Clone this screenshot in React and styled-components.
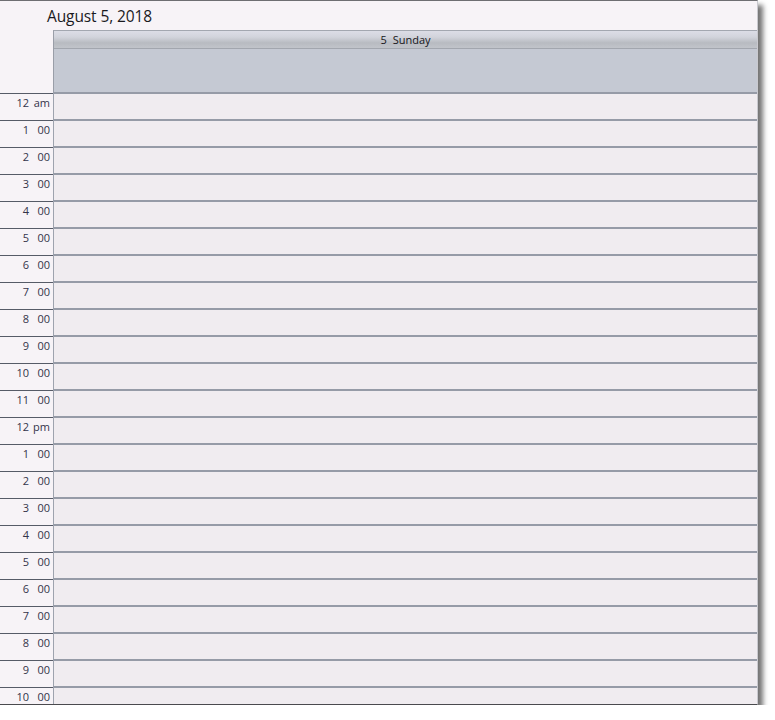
import React from "react";
import styled, { createGlobalStyle } from "styled-components";

const Global = createGlobalStyle`
  html, body { margin: 0; padding: 0; background: #ffffff; }
  body { font-family: "Open Sans", "Noto Sans", sans-serif; }
`;

const Window = styled.div`
  box-sizing: border-box;
  width: 758px;
  height: 705px;
  border-top: 1px solid #6e6e72;
  border-right: 1px solid #c9c9cf;
  border-bottom: 1px solid #4a4a4e;
  background: #f7f3f7;
  box-shadow: 5px 5px 5px rgba(0, 0, 0, 0.55);
  display: flex;
  flex-direction: column;
  overflow: hidden;
`;

const TitleBar = styled.div`
  height: 29px;
  flex: none;
  padding-left: 47px;
  display: flex;
  align-items: center;
  font-family: "Open Sans", "Noto Sans", sans-serif;
  font-size: 15.5px;
  color: #1a1a1e;
  letter-spacing: -0.1px;
`;

const HeaderRow = styled.div`
  display: flex;
  height: 62px;
  flex: none;
`;

const Corner = styled.div`
  width: 53px;
  flex: none;
`;

const DayHeader = styled.div`
  flex: 1;
  box-sizing: border-box;
  border-top: 1px solid #a3a7b0;
  border-left: 1px solid #9a9ea8;
  background: #c5c9d3;
  display: flex;
  flex-direction: column;
`;

const DayBand = styled.div`
  height: 17px;
  flex: none;
  border-bottom: 1px solid #a2a6ae;
  background: linear-gradient(
    to bottom,
    #dcdde6 0%,
    #d2d4dc 35%,
    #b8bbc1 70%,
    #c1c4ca 100%
  );
  display: flex;
  align-items: center;
  justify-content: center;
  font-family: "Open Sans", "Noto Sans", sans-serif;
  font-size: 11px;
  color: #16161a;
  word-spacing: 3px;
`;

const Body = styled.div`
  flex: 1;
  display: flex;
  flex-direction: column;
  overflow: hidden;
`;

const Row = styled.div`
  display: flex;
  height: 27px;
  flex: none;
`;

const TimeCell = styled.div`
  width: 53px;
  flex: none;
  box-sizing: border-box;
  margin-top: 1px;
  border-top: 1px solid #565b67;
  display: grid;
  grid-template-columns: 29px 21px;
  align-items: start;
  padding-top: 1px;
  font-family: "Open Sans", "Noto Sans", sans-serif;
  font-size: 11px;
  line-height: 15px;
  color: #34344a;
`;

const Hour = styled.span`
  text-align: right;
`;

const Suffix = styled.span`
  text-align: right;
`;

const Slot = styled.div`
  flex: 1;
  box-sizing: border-box;
  border-top: 2px solid #969ba7;
  border-left: 1px solid #9ea3ae;
  background: #f0ecf0;
`;

const hours = [];
for (let i = 0; i < 23; i++) {
  let h = i % 12 === 0 ? 12 : i % 12;
  let s = "00";
  if (i === 0) s = "am";
  if (i === 12) s = "pm";
  hours.push({ h, s });
}

export default function App() {
  return (
    <>
      <Global />
      <Window>
        <TitleBar>August 5, 2018</TitleBar>
        <HeaderRow>
          <Corner />
          <DayHeader>
            <DayBand>5 Sunday</DayBand>
          </DayHeader>
        </HeaderRow>
        <Body>
          {hours.map((r, i) => (
            <Row key={i}>
              <TimeCell>
                <Hour>{r.h}</Hour>
                <Suffix>{r.s}</Suffix>
              </TimeCell>
              <Slot />
            </Row>
          ))}
        </Body>
      </Window>
    </>
  );
}
